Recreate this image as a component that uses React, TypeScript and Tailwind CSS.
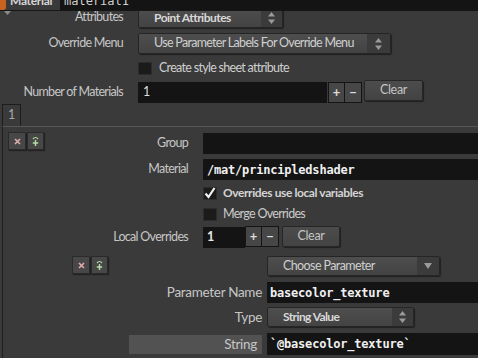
import React from "react";

function UpDown() {
  return (
    <svg width="7" height="12" viewBox="0 0 7 12">
      <path d="M3.5 0 L7 4.5 L0 4.5 Z" fill="#9a9a9a" />
      <path d="M0 7.5 L7 7.5 L3.5 12 Z" fill="#9a9a9a" />
    </svg>
  );
}
function Down() {
  return (
    <svg width="8" height="6" viewBox="0 0 8 6">
      <path d="M0 0 H8 L4 6 Z" fill="#9a9a9a" />
    </svg>
  );
}

function Dropdown({ w, aw, text, cls, ud }: { w: string; aw: string; text: string; cls: string; ud?: boolean }) {
  return (
    <div className={`flex h-full ${w} rounded-[2px] border border-[#252525] bg-gradient-to-b from-[#4e4e4e] to-[#434343] shadow-[1px_1px_1px_rgba(0,0,0,0.45)]`}>
      <div className={`flex-1 flex items-center pl-[15px] whitespace-nowrap ${cls}`}>{text}</div>
      <div className={`${aw} flex items-center justify-center bg-[#3b3b3b]`}>{ud ? <UpDown /> : <Down />}</div>
    </div>
  );
}

function PlusMinus() {
  return (
    <div className="flex h-full">
      <div className="w-[17px] h-full flex items-center justify-center bg-[#474747] border border-[#151515] text-[#dcdcdc] text-[13px] font-bold">+</div>
      <div className="w-[17px] h-full flex items-center justify-center bg-[#474747] border border-l-0 border-[#151515] text-[#dcdcdc] text-[13px] font-bold">−</div>
    </div>
  );
}

function ClearBtn({ w }: { w: string }) {
  return (
    <div className={`${w} h-[21px] flex items-center justify-center rounded-[2px] border border-[#262626] bg-gradient-to-b from-[#4c4c4c] to-[#434343] shadow-[1px_1px_1px_rgba(0,0,0,0.45)] text-[12.5px] tracking-[-0.3px] text-[#c4c4c4]`}>Clear</div>
  );
}

function XIns() {
  return (
    <div className="flex gap-[1px]">
      <div className="w-[18px] h-[18px] flex items-center justify-center bg-[#474747] border border-[#2a2a2a] shadow-[1px_1px_1px_rgba(0,0,0,0.4)]">
        <svg width="7" height="7" viewBox="0 0 7 7">
          <path d="M1 1 L6 6 M6 1 L1 6" stroke="#e2acac" strokeWidth="1.6" />
        </svg>
      </div>
      <div className="w-[17px] h-[18px] flex items-center justify-center bg-[#474747] border border-[#2a2a2a] shadow-[1px_1px_1px_rgba(0,0,0,0.4)]">
        <svg width="7" height="10" viewBox="0 0 7 10">
          <path d="M1 3 Q3.5 0 6 3" stroke="#b4e0a4" strokeWidth="1.2" fill="none" />
          <path d="M3.5 4 V10 M0.8 7 H6.2" stroke="#b4e0a4" strokeWidth="1.4" />
        </svg>
      </div>
    </div>
  );
}

function Check({ checked }: { checked?: boolean }) {
  return (
    <div className="w-[14px] h-[13px] bg-[#1b1b1b] border border-[#2c2c2c] flex items-center justify-center">
      {checked && (
        <svg width="12" height="12" viewBox="0 0 12 12">
          <path d="M1.5 6.5 L4.5 10 L10.5 1" stroke="#f2f2f2" strokeWidth="2.2" fill="none" />
        </svg>
      )}
    </div>
  );
}

const label = "text-[12.5px] tracking-[-0.7px] text-[#c6c6c6] whitespace-nowrap";
const label2 = "text-[13.5px] tracking-[-0.3px] text-[#c6c6c6] whitespace-nowrap";
const mono = "[font-family:DejaVu_Sans_Mono,monospace] font-bold text-[12px] text-[#f0f0f0] tracking-[-0.2px]";

export default function App() {
  return (
    <div className="w-[478px] h-[358px] overflow-hidden bg-[#3a3a3a] [font-family:Lato,sans-serif] relative">
      {/* top bar */}
      <div className="relative z-10 h-[11px] flex overflow-hidden border-b border-[#161616] bg-[#3a3a3a]">
        <div className="w-[6px] h-full bg-[#c8621e] rounded-br-[3px]" />
        <div className="w-[54px] h-full overflow-hidden">
          <div className="-mt-[8px] pl-[4px] text-[12px] tracking-[-0.3px] font-bold text-[#d6d6d6]">Material</div>
        </div>
        <div className="flex-1 h-full bg-[#141414] overflow-hidden">
          <div className="-mt-[8px] pl-[4px] text-[12px] text-[#d0d0d0] [font-family:DejaVu_Sans_Mono,monospace]">material1</div>
        </div>
      </div>
      <div className="absolute left-[4px] top-[11px] z-20">
        <svg width="7" height="5" viewBox="0 0 7 5"><path d="M0 0 H7 L3.5 4 Z" fill="#8a8a8a" /></svg>
      </div>

      {/* Attributes */}
      <div className="flex items-center -mt-[4px] h-[21px]">
        <div className={`w-[123px] text-right ${label}`}>Attributes</div>
        <div className="ml-[15px] h-full">
          <Dropdown w="w-[145px]" aw="w-[21px]" text="Point Attributes" cls="text-[12px] font-bold text-[#d8d8d8] tracking-[-0.5px]" ud />
        </div>
      </div>

      {/* Override Menu */}
      <div className="flex items-center mt-[5px] h-[21px]">
        <div className={`w-[123px] text-right ${label}`}>Override Menu</div>
        <div className="ml-[15px] h-full">
          <Dropdown w="w-[253px]" aw="w-[23px]" text="Use Parameter Labels For Override Menu" cls="text-[12.5px] text-[#cfcfcf] tracking-[-0.7px]" ud />
        </div>
      </div>

      {/* checkbox */}
      <div className="flex items-center mt-[1px] h-[26px] pl-[138px]">
        <Check />
        <div className={`ml-[7px] ${label} text-[#cfcfcf]`}>Create style sheet attribute</div>
      </div>

      {/* Number of Materials */}
      <div className="flex items-start mt-[1px] h-[21px]">
        <div className={`w-[123px] h-full flex items-center justify-end ${label}`}>Number of Materials</div>
        <div className="ml-[15px] w-[189px] h-full bg-[#141414] flex items-center pl-[5px] text-[12.5px] text-[#dedede]">1</div>
        <div className="ml-[1px] h-full">
          <PlusMinus />
        </div>
        <div className="ml-[2px] -mt-[2px]">
          <ClearBtn w="w-[59px]" />
        </div>
      </div>

      {/* tab */}
      <div className="flex mt-[1px] h-[22px]">
        <div className="ml-[2px] w-[19px] h-full border border-b-0 border-[#1d1d1d] flex items-center justify-center text-[12.5px] text-[#a8a8a8]">1</div>
      </div>

      {/* panel */}
      <div className="ml-[2px] border-l border-t border-l-[#202020] border-t-[#575757] h-[240px]">
        {/* Group */}
        <div className="flex items-center mt-[6px] h-[21px]">
          <div className="w-[185px] h-full flex items-start justify-between">
            <div className="ml-[5px] -mt-[1px]">
              <XIns />
            </div>
            <div className={`h-full flex items-center ${label}`}>Group</div>
          </div>
          <div className="ml-[15px] flex-1 h-full bg-[#141414]" />
        </div>

        {/* Material */}
        <div className="flex items-center mt-[5px] h-[21px]">
          <div className={`w-[185px] text-right ${label}`}>Material</div>
          <div className={`ml-[15px] flex-1 h-full bg-[#141414] flex items-center pl-[4px] ${mono}`}>/mat/principledshader</div>
        </div>

        {/* Overrides use local variables */}
        <div className="flex items-center mt-[2px] h-[22px] pl-[200px]">
          <Check checked />
          <div className="ml-[6px] text-[12px] font-bold text-[#d4d4d4] tracking-[-0.4px] whitespace-nowrap">Overrides use local variables</div>
        </div>

        {/* Merge Overrides */}
        <div className="flex items-center h-[20px] pl-[200px]">
          <Check />
          <div className={`ml-[6px] ${label} text-[#cbcbcb]`}>Merge Overrides</div>
        </div>

        {/* Local Overrides */}
        <div className="flex items-start mt-[2px] h-[22px]">
          <div className={`w-[185px] h-full flex items-center justify-end ${label}`}>Local Overrides</div>
          <div className="ml-[15px] mt-[1px] w-[42px] h-[21px] bg-[#141414] flex items-center pl-[4px] text-[12.5px] font-bold text-[#e6e6e6]">1</div>
          <div className="h-[21px]">
            <PlusMinus />
          </div>
          <div className="ml-[3px]">
            <ClearBtn w="w-[58px]" />
          </div>
        </div>

        {/* Choose Parameter */}
        <div className="flex items-start mt-[8px] h-[20px]">
          <div className="w-[260px] pl-[69px]">
            <XIns />
          </div>
          <div className="ml-[4px] h-full">
            <Dropdown w="w-[173px]" aw="w-[22px]" text="Choose Parameter" cls="text-[12.5px] text-[#cfcfcf] tracking-[-0.6px]" />
          </div>
        </div>

        {/* Parameter Name */}
        <div className="flex items-center mt-[6px] h-[21px]">
          <div className={`w-[259px] text-right ${label2}`}>Parameter Name</div>
          <div className={`ml-[5px] flex-1 h-full bg-[#141414] flex items-center pl-[3px] ${mono}`}>basecolor_texture</div>
        </div>

        {/* Type */}
        <div className="flex items-center mt-[4px] h-[20px]">
          <div className={`w-[259px] text-right ${label2}`}>Type</div>
          <div className="ml-[5px] h-full">
            <Dropdown w="w-[147px]" aw="w-[21px]" text="String Value" cls="text-[12px] font-bold text-[#d8d8d8] tracking-[-0.6px]" ud />
          </div>
        </div>

        {/* String */}
        <div className="flex items-center mt-[6px] h-[22px]">
          <div className={`ml-[126px] w-[133px] h-[19px] bg-[#525252] flex items-center justify-end pr-[5px] ${label2}`}>String</div>
          <div className={`ml-[5px] flex-1 h-full bg-[#141414] flex items-center pl-[3px] ${mono}`}>`@basecolor_texture`</div>
        </div>
      </div>
    </div>
  );
}
